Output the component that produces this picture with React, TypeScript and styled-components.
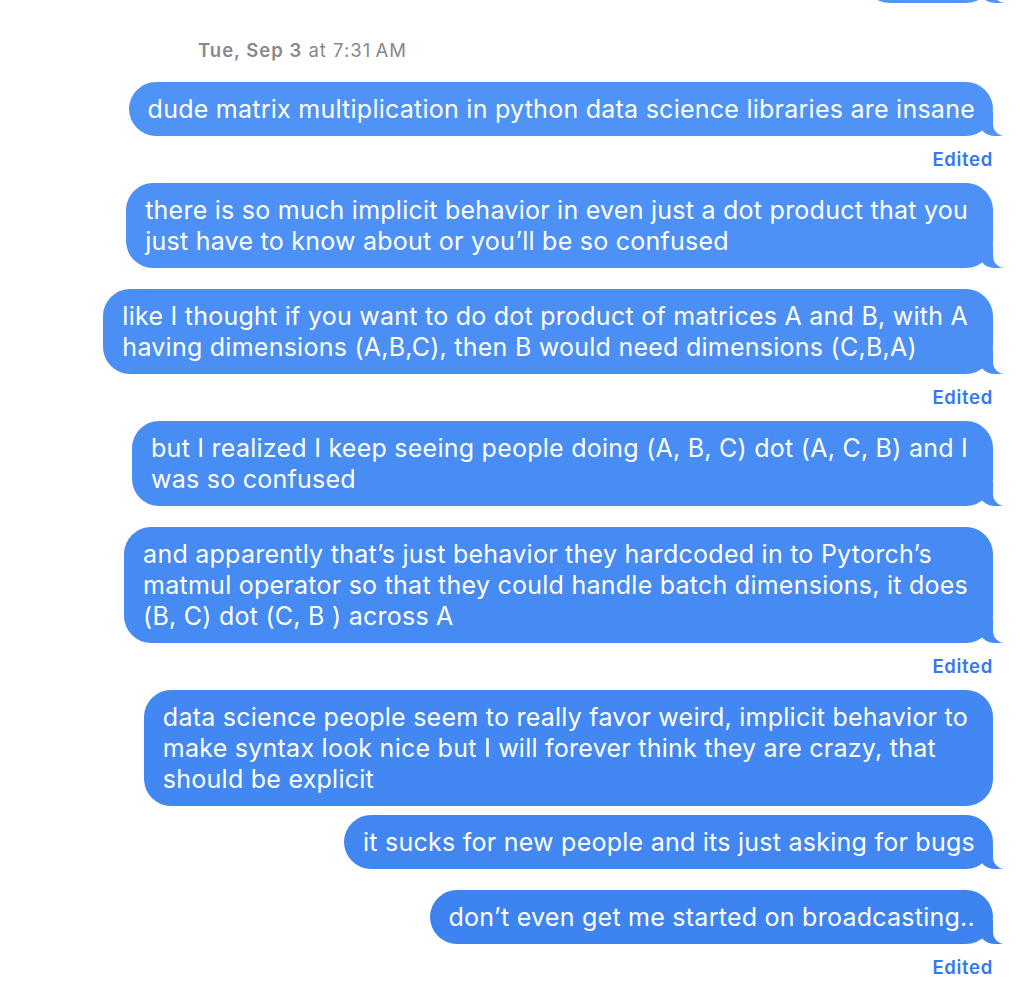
import React from "react";
import styled, { createGlobalStyle, css } from "styled-components";

const GlobalStyle = createGlobalStyle`
  html, body {
    margin: 0;
    padding: 0;
    background: #ffffff;
    overflow: hidden;
  }
  body {
    font-family: Inter, "Helvetica Neue", Arial, sans-serif;
    -webkit-font-smoothing: antialiased;
  }
`;

const Thread = styled.main`
  display: flex;
  flex-direction: column;
  align-items: flex-end;
  box-sizing: border-box;
  width: 1026px;
  height: 982px;
  padding: 0 33px 0 0;
  overflow: hidden;
  background: #ffffff;

  & > * {
    flex-shrink: 0;
  }
`;

const Stamp = styled.div`
  align-self: stretch;
  padding-left: 198px;
  margin: 36px 0 21px;
  font-size: 18.5px;
  line-height: 22px;
  color: #88888c;
  letter-spacing: 1px;

  & b {
    font-weight: 600;
  }
`;

const Group = styled.section<{ $gap: number }>`
  display: flex;
  flex-direction: column;
  align-items: flex-end;
  margin-bottom: ${(p) => p.$gap}px;
`;

const Bubble = styled.div<{ $color: string; $tail: boolean; $wrapped?: boolean }>`
  position: relative;
  box-sizing: border-box;
  background: ${(p) => p.$color};
  color: #ffffff;
  font-size: 25px;
  letter-spacing: 0.25px;
  line-height: 31px;
  padding: 12px ${(p) => (p.$wrapped ? 25 : 18)}px 11px 19px;
  border-radius: 27px;

  ${(p) =>
    p.$tail &&
    css`
      &::before {
        content: "";
        position: absolute;
        bottom: 0;
        right: -10px;
        width: 24px;
        height: 24px;
        background: ${p.$color};
        border-bottom-left-radius: 16px 14px;
      }
      &::after {
        content: "";
        position: absolute;
        bottom: 0;
        right: -30px;
        width: 30px;
        height: 26px;
        background: #ffffff;
        border-bottom-left-radius: 12px;
      }
    `}
`;

const PeekBubble = styled(Bubble)`
  width: 130px;
  height: 54px;
  margin-top: -51px;
`;

const Line = styled.span`
  display: block;
  white-space: nowrap;
`;

const Edited = styled.div`
  font-size: 18.5px;
  letter-spacing: 0.7px;
  line-height: 22px;
  font-weight: 600;
  color: #3478f0;
  margin: 12px 0 13px;
`;

type Msg = {
  lines: string[];
  edited?: boolean;
  tail?: boolean;
  gap: number;
};

const messages: Msg[] = [
  {
    lines: ["dude matrix multiplication in python data science libraries are insane"],
    edited: true,
    gap: 0,
  },
  {
    lines: [
      "there is so much implicit behavior in even just a dot product that you",
      "just have to know about or you\u2019ll be so confused",
    ],
    gap: 21,
  },
  {
    lines: [
      "like I thought if you want to do dot product of matrices A and B, with A",
      "having dimensions (A,B,C), then B would need dimensions (C,B,A)",
    ],
    edited: true,
    gap: 0,
  },
  {
    lines: [
      "but I realized I keep seeing people doing (A, B, C) dot (A, C, B) and I",
      "was so confused",
    ],
    gap: 21,
  },
  {
    lines: [
      "and apparently that\u2019s just behavior they hardcoded in to Pytorch\u2019s",
      "matmul operator so that they could handle batch dimensions, it does",
      "(B, C) dot (C, B ) across A",
    ],
    edited: true,
    gap: 0,
  },
  {
    lines: [
      "data science people seem to really favor weird, implicit behavior to",
      "make syntax look nice but I will forever think they are crazy, that",
      "should be explicit",
    ],
    tail: false,
    gap: 9,
  },
  {
    lines: ["it sucks for new people and its just asking for bugs"],
    gap: 21,
  },
  {
    lines: ["don\u2019t even get me started on broadcasting.."],
    edited: true,
    gap: 0,
  },
];

// subtle top-to-bottom shift of the iMessage blue
const bubbleColor = (i: number, total: number) => {
  const t = total <= 1 ? 0 : i / (total - 1);
  const top = [82, 149, 248];
  const bottom = [62, 132, 240];
  const c = top.map((v, k) => Math.round(v + (bottom[k] - v) * t));
  return `rgb(${c[0]}, ${c[1]}, ${c[2]})`;
};

export default function App() {
  return (
    <>
      <GlobalStyle />
      <Thread>
        <PeekBubble $color={bubbleColor(0, 9)} $tail />
        <Stamp>
          <b>Tue, Sep 3</b> at 7:31&#8239;AM
        </Stamp>
        {messages.map((m, i) => (
          <Group key={i} $gap={m.gap}>
            <Bubble
              $color={bubbleColor(i + 1, 9)}
              $tail={m.tail !== false}
              $wrapped={m.lines.length > 1}
            >
              {m.lines.map((l, j) => (
                <Line key={j}>{l}</Line>
              ))}
            </Bubble>
            {m.edited && <Edited>Edited</Edited>}
          </Group>
        ))}
      </Thread>
    </>
  );
}
